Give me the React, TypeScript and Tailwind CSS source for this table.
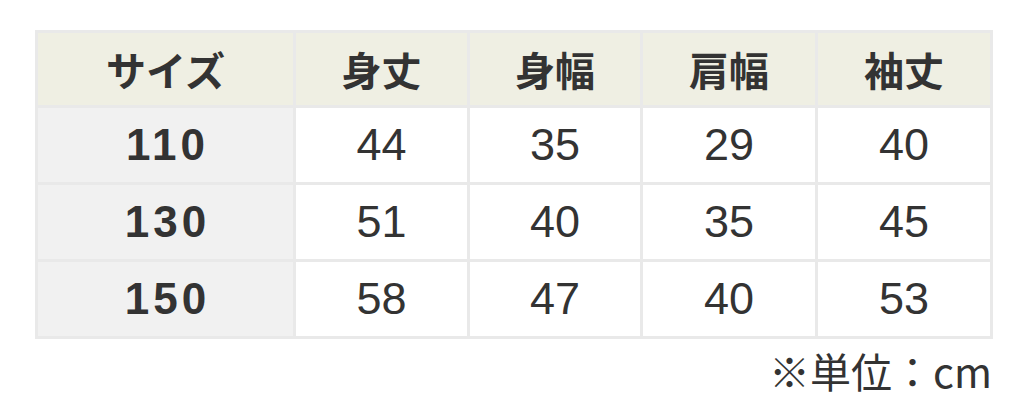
import React from "react";

const headers = ["サイズ", "身丈", "身幅", "肩幅", "袖丈"];
const rows = [
  ["110", "44", "35", "29", "40"],
  ["130", "51", "40", "35", "45"],
  ["150", "58", "47", "40", "53"],
];

export default function App() {
  return (
    <div className="w-[1024px] h-[404px] bg-white pl-[35px] pt-[30px] text-[#333333]">
      <div className="w-[958px] grid grid-cols-[255px_171px_170px_172px_172px] gap-[3px] p-[3px] bg-[#e9e9e9]">
        {headers.map((h) => (
          <div
            key={h}
            className="h-[72px] bg-[#efefe3] flex items-center justify-center text-[40px] font-bold font-['Noto_Sans_CJK_JP','Noto_Sans',sans-serif]"
          >
            {h}
          </div>
        ))}
        {rows.map((r) =>
          r.map((c, i) =>
            i === 0 ? (
              <div
                key={r[0] + i}
                className="h-[74px] bg-[#f1f1f1] flex items-center justify-center text-[44px] font-bold tracking-[4px] pl-[4px] font-['Liberation_Sans',sans-serif]"
              >
                {c}
              </div>
            ) : (
              <div
                key={r[0] + i}
                className="h-[74px] bg-white flex items-center justify-center text-[45px] font-['Liberation_Sans',sans-serif]"
              >
                {c}
              </div>
            )
          )
        )}
      </div>
      <div className="w-[957px] h-[64px] flex items-center justify-end text-[41px] font-['Noto_Sans_CJK_JP','Noto_Sans',sans-serif]">
        ※単位：cm
      </div>
    </div>
  );
}
